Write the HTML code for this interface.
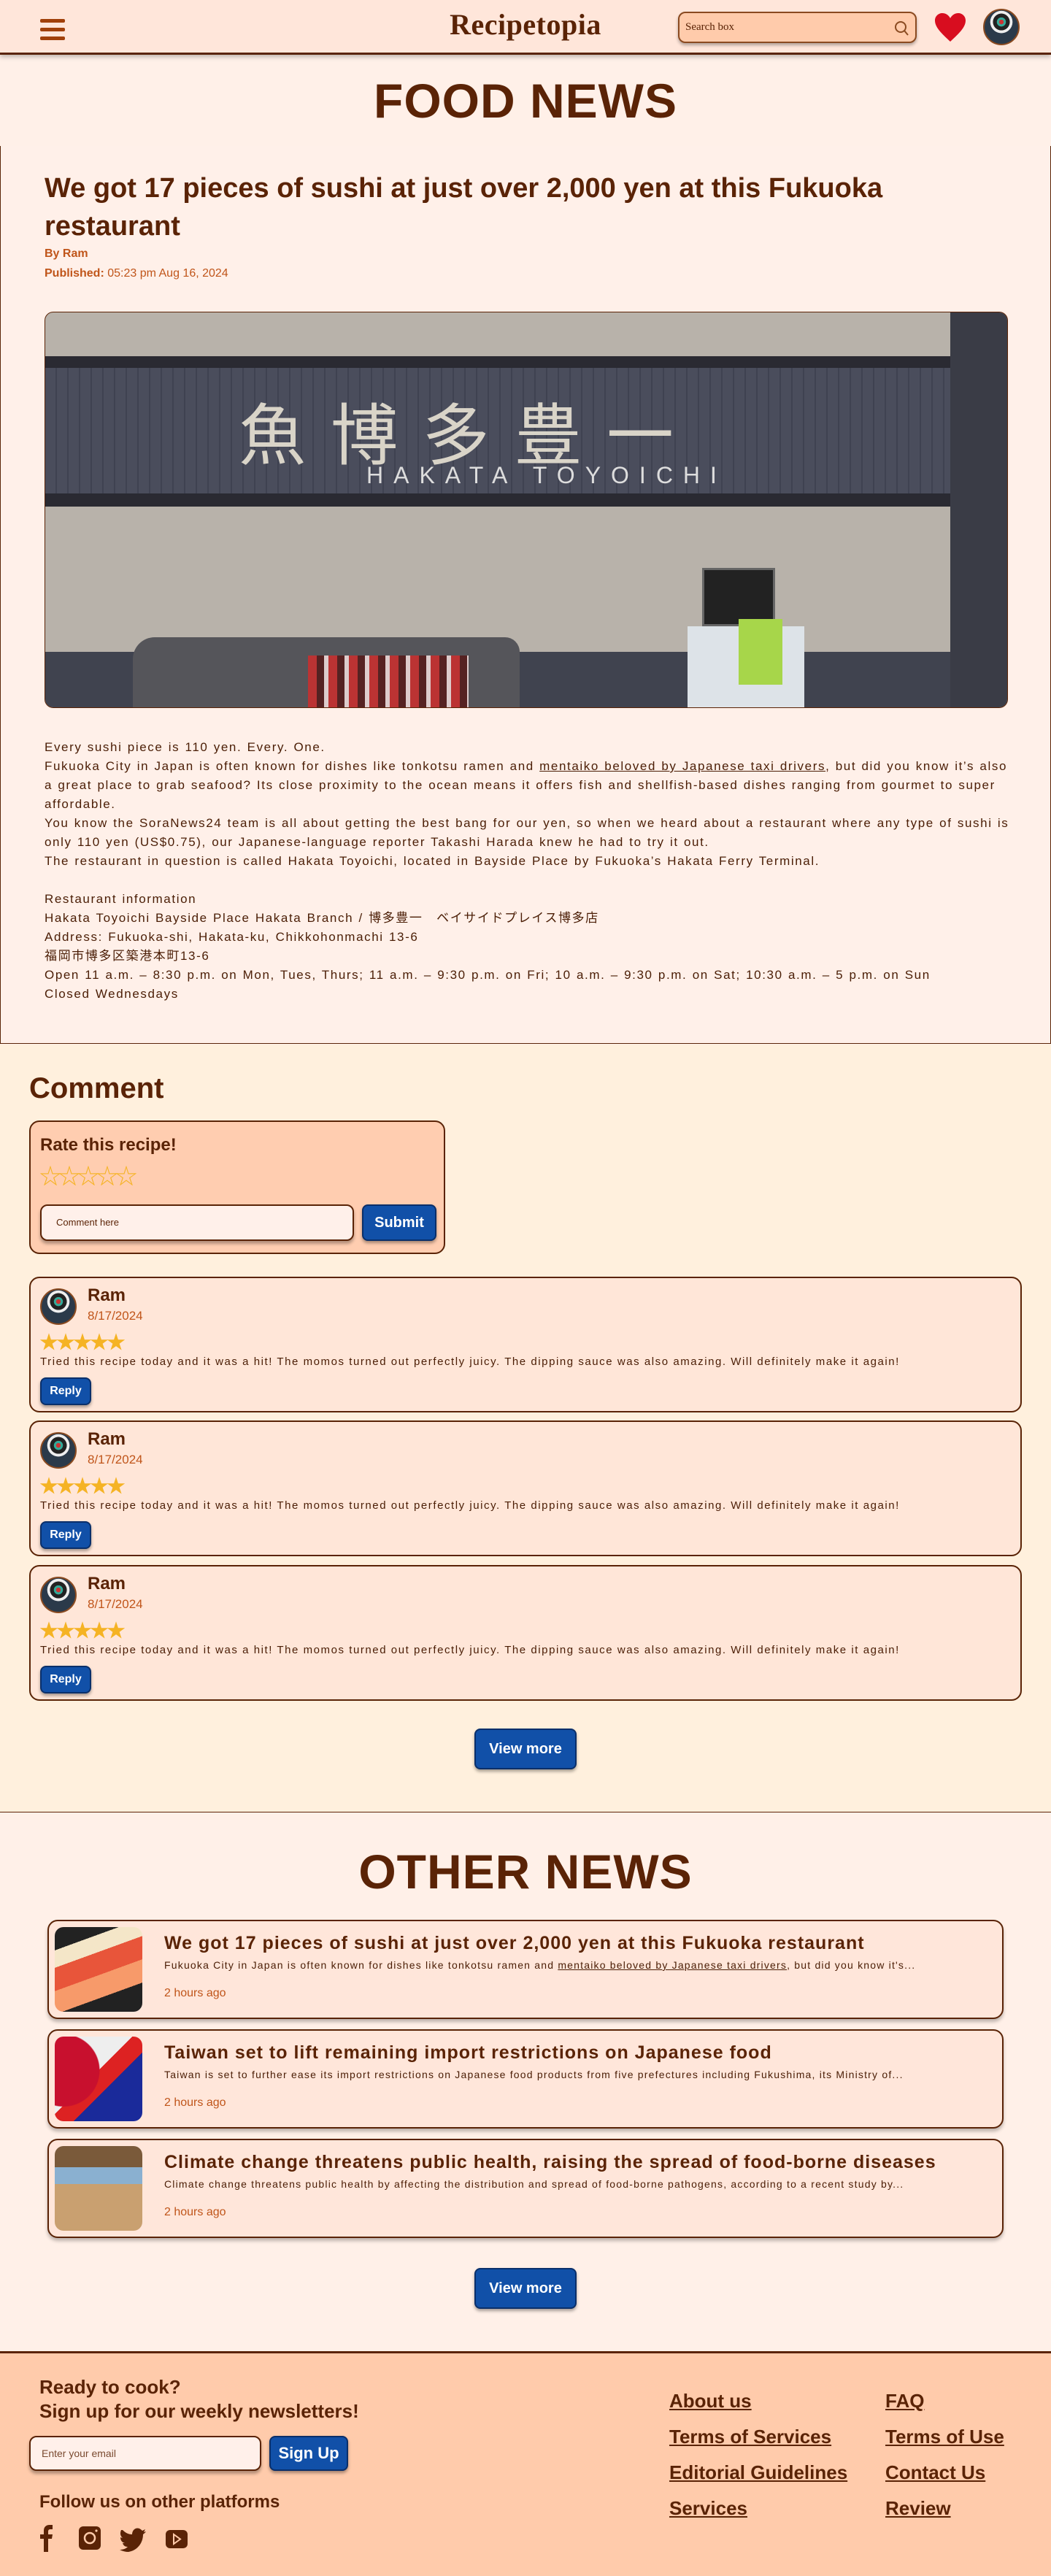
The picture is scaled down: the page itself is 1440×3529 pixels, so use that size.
<!DOCTYPE html>
<html><head><meta charset="utf-8">
<style>
*{box-sizing:border-box;margin:0;padding:0}
body{width:1440px;height:3529px;font-family:"Liberation Sans","Noto Sans CJK JP",sans-serif;color:#5a2306;background:#fff0e8;position:relative;overflow:hidden}
.abs{position:absolute}
header{position:absolute;left:0;top:0;width:1440px;height:75px;background:#ffe6da;border-bottom:3px solid #5a2306;box-shadow:0 3px 6px rgba(0,0,0,.25);z-index:5}
.ham{position:absolute;left:55px;top:26px;width:34px}
.ham i{display:block;height:5px;background:#a0400a;border-radius:2px;margin-bottom:7px}
.logo{position:absolute;left:0;width:1440px;top:10px;text-align:center;font-family:"Liberation Serif",serif;font-size:40px;font-weight:bold;color:#5a2306;letter-spacing:.5px}
.search{position:absolute;left:929px;top:16px;width:327px;height:43px;background:#ffcbab;border:2px solid #8a4a20;border-radius:10px;box-shadow:0 3px 4px rgba(0,0,0,.3);font-family:"Liberation Serif",serif;font-size:15px;padding:11px 8px;color:#5a2306}
.avatar{border-radius:50%;background:radial-gradient(circle at 50% 35%,#c33 0 8%,#3a9 9% 16%,#222 17% 30%,#eee 31% 40%,#2b3a4a 41%);border:2px solid #8a4a20}
h1.big{position:absolute;left:0;width:1440px;text-align:center;font-size:66px;font-weight:900;color:#5a2306;letter-spacing:1px}
.article{position:absolute;left:0;top:200px;width:1440px;height:1230px;border:1px solid #5a2306;border-top:none;background:rgba(255,240,234,.6)}
.article h2{position:absolute;left:60px;top:32px;width:1320px;font-size:38px;line-height:52px;font-weight:bold;color:#5a2306}
.meta{position:absolute;left:60px;font-size:16px;color:#c0551a;font-weight:bold}
.meta span{font-weight:normal}
.body{position:absolute;left:60px;top:811px;width:1330px;font-size:17px;line-height:26px;color:#4a1d05;letter-spacing:1.6px;word-spacing:1px}
.comment-sec{position:absolute;left:0;top:1431px;width:1440px;height:1052px;background:#fff0dd;border-bottom:1px solid #5a2306}
.card{position:absolute;left:40px;width:1360px;height:186px;background:#ffe6d8;border:2px solid #5a2306;border-radius:14px}
.card .av{position:absolute;left:13px;top:14px;width:50px;height:50px}
.card .nm{position:absolute;left:78px;top:10px;font-size:24px;font-weight:bold}
.card .dt{position:absolute;left:78px;top:42px;font-size:17px;color:#c0551a}
.card .st{position:absolute;left:12px;top:68px;font-size:26px;color:#f5b324;letter-spacing:-3px}
.card .tx{position:absolute;left:13px;top:106px;font-size:15px;color:#4a1d05;letter-spacing:1.55px}
.btn{background:#1150a8;color:#fff;font-weight:bold;border:2px solid #0a2f6a;border-radius:8px;box-shadow:0 3px 4px rgba(0,0,0,.35);text-align:center;position:absolute}
.card .btn{left:13px;top:136px;width:70px;height:38px;line-height:34px;font-size:16px}
.other{position:absolute;left:0;top:2484px;width:1440px;height:737px;background:#fff0e8}
.oc{position:absolute;left:65px;width:1310px;height:136px;background:#ffe6da;border:2px solid #5a2306;border-radius:14px;box-shadow:0 4px 5px rgba(0,0,0,.25)}
.oc .im{position:absolute;left:8px;top:8px;width:120px;height:116px;border-radius:12px}
.oc .t{position:absolute;left:158px;top:16px;font-size:25px;font-weight:bold;letter-spacing:1px;white-space:nowrap}
.oc .d{position:absolute;left:158px;top:52px;font-size:14px;color:#4a1d05;letter-spacing:1.2px;white-space:nowrap}
.oc .h{position:absolute;left:158px;top:90px;font-size:16px;color:#c0551a}
footer{position:absolute;left:0;top:3221px;width:1440px;height:308px;background:#ffcbab;border-top:3px solid #5a2306}
.fl{position:absolute;font-size:26px;text-decoration:underline;color:#5a2306;font-weight:bold}
</style></head><body>

<header>
 <div class="ham"><i></i><i></i><i></i></div>
 <div class="logo">Recipetopia</div>
 <div class="search">Search box
  <svg class="abs" style="right:8px;top:10px" width="22" height="22" viewBox="0 0 22 22"><circle cx="10" cy="9" r="7" fill="none" stroke="#8a4a20" stroke-width="2"/><path d="M15 14l5 6" stroke="#8a4a20" stroke-width="2"/></svg>
 </div>
 <svg class="abs" style="left:1279px;top:17px" width="46" height="42" viewBox="0 0 46 42"><path d="M23 40C10 28 2 20 2 11 2 5 7 1 12 1c5 0 9 3 11 7 2-4 6-7 11-7 5 0 10 4 10 10 0 9-8 17-21 29z" fill="#d80d1f"/></svg>
 <div class="abs avatar" style="left:1347px;top:12px;width:50px;height:50px"></div>
</header>

<h1 class="big" style="top:100px">FOOD NEWS</h1>

<div class="article">
 <h2>We got 17 pieces of sushi at just over 2,000 yen at this Fukuoka restaurant</h2>
 <div class="meta" style="top:139px">By Ram</div>
 <div class="meta" style="top:166px">Published: <span>05:23 pm Aug 16, 2024</span></div>
 <div class="abs" style="left:60px;top:227px;width:1320px;height:543px;border-radius:12px;overflow:hidden;background:#b8b2aa;border:1px solid #5a2306">
  <div class="abs" style="left:0;top:60px;width:1240px;height:18px;background:#2a2a32"></div>
  <div class="abs" style="left:0;top:76px;width:1240px;height:175px;background:repeating-linear-gradient(90deg,#4a4d5c 0 14px,#3f4251 14px 16px)"></div>
  <div class="abs" style="left:0;top:248px;width:1240px;height:18px;background:#2a2a32"></div>
  <div class="abs" style="left:1240px;top:0;width:80px;height:543px;background:#3a3c46"></div>
  <div class="abs" style="left:265px;top:95px;font-size:92px;color:#d9d4c8;font-family:'Noto Sans CJK JP',sans-serif;letter-spacing:34px">魚博多豊一</div>
  <div class="abs" style="left:440px;top:205px;font-size:32px;color:#ddd;letter-spacing:14px">HAKATA TOYOICHI</div>
  <div class="abs" style="left:0;top:465px;width:1240px;height:78px;background:#40434f"></div>
  <div class="abs" style="left:120px;top:445px;width:530px;height:98px;background:#55555a;border-radius:30px 20px 0 0"></div>
  <div class="abs" style="left:360px;top:470px;width:220px;height:73px;background:repeating-linear-gradient(90deg,#b33 0 12px,#522 12px 22px,#dcc 22px 28px)"></div>
  <div class="abs" style="left:900px;top:350px;width:100px;height:80px;background:#222;border:3px solid #666"></div>
  <div class="abs" style="left:880px;top:430px;width:160px;height:113px;background:#dde3e8"></div>
  <div class="abs" style="left:950px;top:420px;width:60px;height:90px;background:#a7d64a"></div>
 </div>
 <div class="body">Every sushi piece is 110 yen. Every. One.<br>Fukuoka City in Japan is often known for dishes like tonkotsu ramen and <u>mentaiko beloved by Japanese taxi drivers</u>, but did you know it’s also a great place to grab seafood? Its close proximity to the ocean means it offers fish and shellfish-based dishes ranging from gourmet to super affordable.<br>You know the SoraNews24 team is all about getting the best bang for our yen, so when we heard about a restaurant where any type of sushi is only 110 yen (US$0.75), our Japanese-language reporter Takashi Harada knew he had to try it out.<br>The restaurant in question is called Hakata Toyoichi, located in Bayside Place by Fukuoka’s Hakata Ferry Terminal.<br><br>Restaurant information<br>Hakata Toyoichi Bayside Place Hakata Branch / 博多豊一　ベイサイドプレイス博多店<br>Address: Fukuoka-shi, Hakata-ku, Chikkohonmachi 13-6<br>福岡市博多区築港本町13-6<br>Open 11 a.m. – 8:30 p.m. on Mon, Tues, Thurs; 11 a.m. – 9:30 p.m. on Fri; 10 a.m. – 9:30 p.m. on Sat; 10:30 a.m. – 5 p.m. on Sun<br>Closed Wednesdays</div>
</div>

<div class="comment-sec">
 <div class="abs" style="left:40px;top:38px;font-size:40px;font-weight:bold">Comment</div>
 <div class="abs" style="left:40px;top:104px;width:570px;height:183px;background:#ffcdb0;border:2px solid #5a2306;border-radius:14px">
  <div class="abs" style="left:13px;top:18px;font-size:24px;font-weight:bold">Rate this recipe!</div>
  <div class="abs" style="left:12px;top:50px;font-size:30px;color:#f5b324;letter-spacing:-4px">☆☆☆☆☆</div>
  <div class="abs" style="left:13px;top:113px;width:430px;height:50px;background:#fff0ea;border:2px solid #5a2306;border-radius:10px;box-shadow:0 4px 4px rgba(0,0,0,.3);font-size:13px;padding:15px 20px;color:#5a2306">Comment here</div>
  <div class="btn" style="left:454px;top:113px;width:102px;height:50px;line-height:46px;font-size:20px">Submit</div>
 </div>
 <div class="card" style="top:318px"><div class="av avatar"></div><div class="nm">Ram</div><div class="dt">8/17/2024</div><div class="st">★★★★★</div><div class="tx">Tried this recipe today and it was a hit! The momos turned out perfectly juicy. The dipping sauce was also amazing. Will definitely make it again!</div><div class="btn">Reply</div></div>
 <div class="card" style="top:515px"><div class="av avatar"></div><div class="nm">Ram</div><div class="dt">8/17/2024</div><div class="st">★★★★★</div><div class="tx">Tried this recipe today and it was a hit! The momos turned out perfectly juicy. The dipping sauce was also amazing. Will definitely make it again!</div><div class="btn">Reply</div></div>
 <div class="card" style="top:713px"><div class="av avatar"></div><div class="nm">Ram</div><div class="dt">8/17/2024</div><div class="st">★★★★★</div><div class="tx">Tried this recipe today and it was a hit! The momos turned out perfectly juicy. The dipping sauce was also amazing. Will definitely make it again!</div><div class="btn">Reply</div></div>
 <div class="btn" style="left:650px;top:937px;width:140px;height:56px;line-height:52px;font-size:20px">View more</div>
</div>

<div class="other">
 <h1 class="big" style="top:42px">OTHER NEWS</h1>
 <div class="oc" style="top:146px"><div class="im" style="background:linear-gradient(160deg,#222 0 20%,#f4e6c8 20% 35%,#e8553a 35% 55%,#f79a6a 55% 75%,#222 75%)"></div><div class="t">We got 17 pieces of sushi at just over 2,000 yen at this Fukuoka restaurant</div><div class="d">Fukuoka City in Japan is often known for dishes like tonkotsu ramen and <u>mentaiko beloved by Japanese taxi drivers</u>, but did you know it's...</div><div class="h">2 hours ago</div></div>
 <div class="oc" style="top:296px"><div class="im" style="background:radial-gradient(circle at 10% 40%,#c8102e 0 38%,transparent 39%),linear-gradient(135deg,#eee 0 45%,#d22 45% 60%,#1a2a9a 60%)"></div><div class="t">Taiwan set to lift remaining import restrictions on Japanese food</div><div class="d">Taiwan is set to further ease its import restrictions on Japanese food products from five prefectures including Fukushima, its Ministry of...</div><div class="h">2 hours ago</div></div>
 <div class="oc" style="top:446px"><div class="im" style="background:linear-gradient(180deg,#7a5a3a 0 25%,#8ab0d0 25% 45%,#c9a070 45% 100%)"></div><div class="t">Climate change threatens public health, raising the spread of food-borne diseases</div><div class="d">Climate change threatens public health by affecting the distribution and spread of food-borne pathogens, according to a recent study by...</div><div class="h">2 hours ago</div></div>
 <div class="btn" style="left:650px;top:623px;width:140px;height:56px;line-height:52px;font-size:20px">View more</div>
</div>

<footer>
 <div class="abs" style="left:54px;top:30px;font-size:26px;font-weight:bold;line-height:33px">Ready to cook?<br>Sign up for our weekly newsletters!</div>
 <div class="abs" style="left:40px;top:113px;width:318px;height:48px;background:#fff0ea;border:2px solid #5a2306;border-radius:10px;box-shadow:0 4px 4px rgba(0,0,0,.3);font-size:14px;padding:14px 15px;color:#7a4a30">Enter your email</div>
 <div class="btn" style="left:369px;top:113px;width:108px;height:48px;line-height:44px;font-size:22px">Sign Up</div>
 <div class="abs" style="left:54px;top:190px;font-size:24px;font-weight:bold">Follow us on other platforms</div>
 <svg class="abs" style="left:52px;top:234px" width="220" height="40" viewBox="0 0 220 40">
  <path d="M8 38V20H3v-6h5V9c0-5 3-8 8-8h4v6h-3c-2 0-3 1-3 3v4h6l-1 6h-5v18z" fill="#5a2306"/>
  <rect x="56" y="3" width="30" height="32" rx="6" fill="#5a2306"/><circle cx="71" cy="19" r="7" fill="none" stroke="#ffcbab" stroke-width="2.5"/><circle cx="80" cy="9" r="1.6" fill="#ffcbab"/>
  <path d="M116 8c4 4 8 6 13 6 0-6 5-10 10-8 2 1 3 2 4 3l4-2-2 4 3-1c-1 2-3 3-4 4 0 12-8 22-20 24-4 0-8-1-12-3 4 0 8-1 11-4-4 0-6-2-7-5h3c-4-1-6-4-6-8l3 1c-3-3-4-6-2-11z" fill="#5a2306"/>
  <rect x="175" y="8" width="30" height="25" rx="6" fill="#5a2306"/><path d="M186 14v13l9-6.5z" fill="none" stroke="#ffcbab" stroke-width="2"/>
 </svg>
 <div class="fl" style="left:917px;top:50px">About us</div>
 <div class="fl" style="left:1213px;top:50px">FAQ</div>
 <div class="fl" style="left:917px;top:99px">Terms of Services</div>
 <div class="fl" style="left:1213px;top:99px">Terms of Use</div>
 <div class="fl" style="left:917px;top:148px">Editorial Guidelines</div>
 <div class="fl" style="left:1213px;top:148px">Contact Us</div>
 <div class="fl" style="left:917px;top:197px">Services</div>
 <div class="fl" style="left:1213px;top:197px">Review</div>
</footer>
</body></html>
